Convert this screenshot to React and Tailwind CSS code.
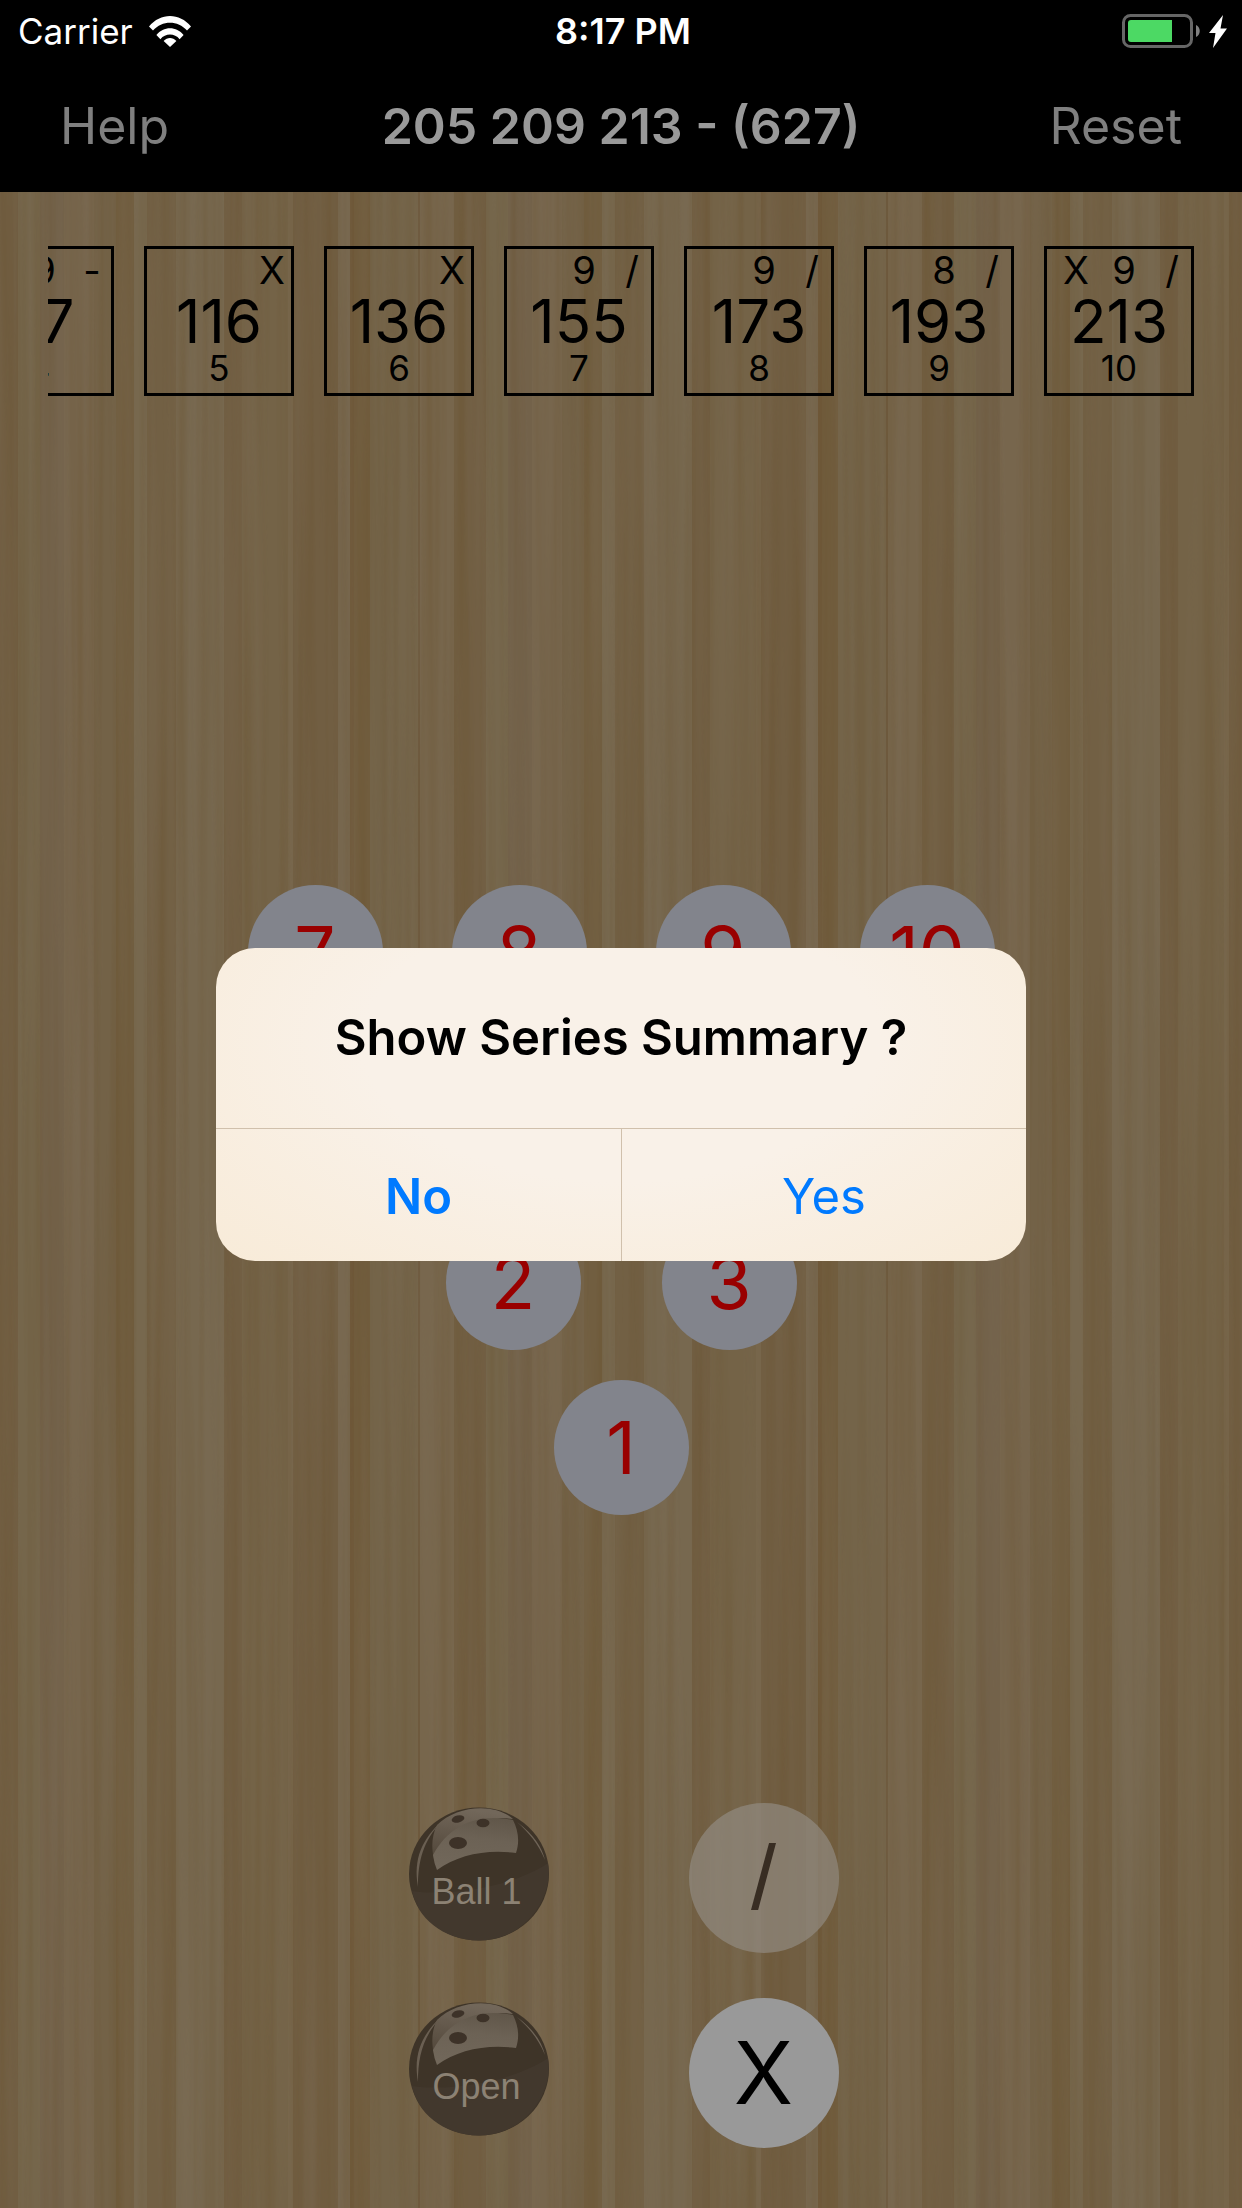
import React from "react";

const frames = [
  { marks: ["", "9", "-"], total: "87", number: 4 },
  { marks: ["", "", "X"], total: "116", number: 5 },
  { marks: ["", "", "X"], total: "136", number: 6 },
  { marks: ["", "9", "/"], total: "155", number: 7 },
  { marks: ["", "9", "/"], total: "173", number: 8 },
  { marks: ["", "8", "/"], total: "193", number: 9 },
  { marks: ["X", "9", "/"], total: "213", number: 10 },
];

const pinRows = [
  { gap: "gap-[69px]", pins: [7, 8, 9, 10] },
  { gap: "gap-[75px]", pins: [4, 5, 6] },
  { gap: "gap-[81px]", pins: [2, 3] },
  { gap: "gap-0", pins: [1] },
];

// Planks of one wood tile: [x, width, colour]
const planks = [
  [0, 18, "#705d40"],
  [18, 22, "#75664c"],
  [40, 24, "#73624a"],
  [64, 30, "#77674e"],
  [94, 22, "#736247"],
  [116, 18, "#705c3e"],
  [134, 13, "#78694f"],
  [147, 29, "#715f43"],
  [176, 48, "#786950"],
  [224, 18, "#705d40"],
  [242, 46, "#746347"],
  [288, 5, "#77674c"],
  [293, 45, "#705d40"],
  [338, 12, "#78684f"],
  [350, 4, "#6e5636"],
  [354, 16, "#705b3b"],
  [370, 48, "#746449"],
  [418, 2, "#6c583b"],
  [420, 34, "#77674d"],
  [454, 14, "#705c3f"],
];

function WoodFloor() {
  return (
    <svg className="absolute inset-0 h-full w-full" aria-hidden="true">
      <defs>
        <pattern id="planks" width="468" height="2400" patternUnits="userSpaceOnUse">
          {planks.map(([x, w, c]) => (
            <rect key={x} x={x} width={w + 1} height="2400" fill={c} />
          ))}
        </pattern>
        <filter id="grain" x="0" y="0" width="100%" height="100%" colorInterpolationFilters="sRGB">
          <feTurbulence type="fractalNoise" baseFrequency="0.09 0.0012" numOctaves="3" seed="7" />
          <feColorMatrix values="0 0 0 0 0.40  0 0 0 0 0.30  0 0 0 0 0.15  2 0 0 0 -0.8" />
        </filter>
        <filter id="sheen" x="0" y="0" width="100%" height="100%" colorInterpolationFilters="sRGB">
          <feTurbulence type="fractalNoise" baseFrequency="0.05 0.0015" numOctaves="3" seed="21" />
          <feColorMatrix values="0 0 0 0 0.50  0 0 0 0 0.44  0 0 0 0 0.36  2 0 0 0 -0.8" />
        </filter>
      </defs>
      <rect width="100%" height="100%" fill="#756449" />
      <rect width="100%" height="100%" fill="url(#planks)" opacity="0.8" />
      <rect width="100%" height="100%" filter="url(#grain)" opacity="0.28" />
      <rect width="100%" height="100%" filter="url(#sheen)" opacity="0.28" />
    </svg>
  );
}

function WifiIcon() {
  return (
    <svg viewBox="0 0 42 31" className="h-[31px] w-[42px]" fill="#fff" aria-hidden="true">
      <path d="M0 10.5 C11.5 -3.5 30.5 -3.5 42 10.5 L38 14.6 C29 4.2 13 4.2 4 14.6 Z" />
      <path d="M7.4 19 C14.5 10 27.5 10 34.6 19 L30.6 23.2 C25.6 17 16.4 17 11.4 23.2 Z" />
      <path d="M14.6 25 C18.2 21 23.8 21 27.4 25 L21 31 Z" />
    </svg>
  );
}

function BatteryIcon() {
  return (
    <svg viewBox="0 0 106 34" className="h-[34px] w-[106px]" aria-hidden="true">
      <rect x="1.5" y="1.5" width="68" height="31" rx="7" fill="none" stroke="#666" strokeWidth="3" />
      <path d="M9 6 H50 V28 H9 a3 3 0 0 1 -3 -3 V9 a3 3 0 0 1 3 -3 Z" fill="#4cd964" />
      <path d="M74 11 C79 13 79 21 74 23 Z" fill="#808080" />
      <path d="M101 1 L87 19 H93.500 L91 34 L105 14.500 H98.500 Z" fill="#fff" />
    </svg>
  );
}

function BallButton({ id, label }) {
  return (
    <button type="button" className="relative flex size-[150px] items-center justify-center">
      <svg viewBox="0 0 150 150" className="absolute inset-0 size-full" aria-hidden="true">
        <defs>
          <linearGradient id={`${id}-shine`} x1="0.6" y1="0" x2="0.4" y2="1">
            <stop offset="0" stopColor="#61574a" />
            <stop offset="0.4" stopColor="#6c6255" />
            <stop offset="1" stopColor="#71675a" />
          </linearGradient>
          <linearGradient id={`${id}-back`} x1="0.3" y1="0" x2="0.1" y2="1">
            <stop offset="0" stopColor="#72675a" />
            <stop offset="1" stopColor="#52473a" />
          </linearGradient>
        </defs>
        <ellipse cx="75" cy="71" rx="70" ry="66.500" fill="#3e3428" />
        <path d="M8 88 C50 94 112 82 144 60 C150 98 118 138 75 137.500 C38 137 13 114 8 88 Z" fill="#42382d" />
        <path d="M14 84 C9 56 18 36 38 18 C19 38 14 58 14 84 Z" fill="#6a5f52" />
        <path d="M113 19 C130 32 138 44 141 57 C134 40 125 30 113 19 Z" fill="#6f6457" />
        <path
          d="M33 22 C52 3 90 -1 109 16 C86 13 62 20 48 34 C40 42 35 50 30 56 C27 44 28 32 33 22 Z"
          fill={`url(#${id}-back)`}
        />
        <path
          d="M29 52 C46 20 76 10 109 17 C114 27 116 38 112 50 C82 46 54 52 33 67 Q30 60 29 52 Z"
          fill={`url(#${id}-shine)`}
        />
        <g fill="#3d3228">
          <ellipse cx="54" cy="16" rx="6.500" ry="3.500" transform="rotate(-14 54 16)" />
          <ellipse cx="79" cy="20" rx="6.500" ry="4.200" />
          <ellipse cx="54" cy="40" rx="9" ry="6" />
        </g>
      </svg>
      <span className="relative mt-7 mr-1 font-['Liberation_Sans',sans-serif] text-[36px] leading-[40px] text-[#8c8274]">
        {label}
      </span>
    </button>
  );
}

function Frame({ marks, total, number }) {
  return (
    <li className="flex size-[150px] shrink-0 flex-col items-stretch border-[3px] border-black text-center">
      <div className="ml-[5px] grid h-[43px] w-36 grid-cols-3 text-[38px] leading-[43px]">
        {marks.map((mark, i) => (
          <span key={i}>{mark}</span>
        ))}
      </div>
      <div className="h-[58px] text-[60px] leading-[58px]">{total}</div>
      <div className="h-[36px] text-[35px] leading-[36px]">{number}</div>
    </li>
  );
}

export default function App() {
  return (
    <div className="relative flex min-h-screen flex-col bg-[#746349] font-['Inter',sans-serif] text-black">
      <header className="bg-black">
        <div className="grid h-[60px] grid-cols-[1fr_auto_1fr] items-center pt-[2px] pr-[14px] pl-[18px] text-[35px] leading-[58px] text-white">
          <div className="flex items-center gap-4">
            <span>Carrier</span>
            <WifiIcon />
          </div>
          <div className="text-center text-[36px] font-semibold">8:17 PM</div>
          <div className="flex justify-end">
            <BatteryIcon />
          </div>
        </div>
        <nav className="grid h-[132px] grid-cols-[1fr_auto_1fr] items-center px-[60px] text-[50px] leading-[60px] text-[#7f7f7f]">
          <button type="button" className="justify-self-start">
            Help
          </button>
          <h1 className="font-semibold text-[#999]">205 209 213 - (627)</h1>
          <button type="button" className="justify-self-end">
            Reset
          </button>
        </nav>
      </header>

      <main className="relative flex flex-1 flex-col overflow-hidden pt-[54px] pb-15">
        <WoodFloor />
        <ol className="relative mx-12 flex justify-end gap-[30px] overflow-hidden">
          {frames.map((frame) => (
            <Frame key={frame.number} {...frame} />
          ))}
        </ol>

        <div className="relative mt-auto flex flex-col items-center gap-[30px]">
          {pinRows.map((row) => (
            <div key={row.pins[0]} className={`flex ${row.gap}`}>
              {row.pins.map((pin) => (
                <button
                  key={pin}
                  type="button"
                  className="size-[135px] rounded-full bg-[#82848c] text-[73px] leading-[135px] text-[#990000]"
                >
                  {pin}
                </button>
              ))}
            </div>
          ))}
        </div>

        <div className="relative mx-auto mt-72 grid grid-cols-2 gap-x-[135px] gap-y-[45px]">
          <BallButton id="ball" label="Ball 1" />
          <button
            type="button"
            className="size-[150px] rounded-full bg-[#928a80]/70 font-['Liberation_Sans',sans-serif] text-[90px] leading-[150px] text-[#382d23]"
          >
            /
          </button>
          <BallButton id="open" label="Open" />
          <button
            type="button"
            className="size-[150px] rounded-full bg-[#999] text-[87px] leading-[150px]"
          >
            X
          </button>
        </div>
      </main>

      <div className="fixed inset-0 flex items-center justify-center">
        <div
          role="alertdialog"
          aria-labelledby="dialog-title"
          className="w-[810px] max-w-full overflow-hidden rounded-[39px] bg-[#f9f0e6] bg-[radial-gradient(ellipse_at_50%_30%,#f9f1e8_45%,#f8ebd8_100%)]"
        >
          <h2 id="dialog-title" className="flex h-[180px] items-center justify-center text-[49px] leading-[60px] font-semibold">
            Show Series Summary ?
          </h2>
          <div className="grid h-[133px] grid-cols-2 border-t border-[#d0c0ac] text-[49px] leading-[60px] text-[#007aff]">
            <button type="button" className="pt-1 font-semibold">
              No
            </button>
            <button type="button" className="border-l border-[#d0c0ac] pt-1">
              Yes
            </button>
          </div>
        </div>
      </div>
    </div>
  );
}
